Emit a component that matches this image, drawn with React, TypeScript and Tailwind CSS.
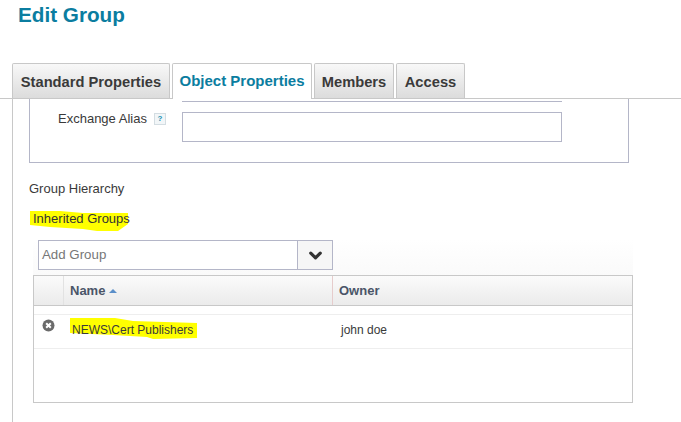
import { ChevronDown } from 'lucide-react';

const tabs = [
  { label: 'Standard Properties', width: 'w-[158px]' },
  { label: 'Object Properties', width: 'w-[140px]', active: true },
  { label: 'Members', width: 'w-[80px]' },
  { label: 'Access', width: 'w-[69px]' },
];

export default function App() {
  return (
    <div className="h-[422px] w-[681px] overflow-hidden bg-white font-['Liberation_Sans',Arial,sans-serif] text-[12px] text-[#3a3a3a]">
      <h1 className="pl-[18px] pt-[3px] text-[20.7px] leading-[24px] font-bold text-[#0b7da0]">Edit Group</h1>

      <div className="mt-[36px] flex h-[36px] items-end gap-[2px] border-b border-[#c8c8c8] pl-[12px]">
        {tabs.map((tab) =>
          tab.active ? (
            <div key={tab.label} className={`${tab.width} relative -mb-px flex h-[36px] items-center justify-center rounded-t-[2px] border border-b-0 border-[#c8c8c8] bg-white text-[15px] font-bold text-[#0b7da0]`}>
              {tab.label}
            </div>
          ) : (
            <div key={tab.label} className={`${tab.width} flex h-[35px] items-center justify-center rounded-t-[2px] border border-b-0 border-[#c8c8c8] bg-gradient-to-b from-[#f8f8f8] to-[#dcdcdc] pt-[2px] text-[14.7px] font-bold text-[#3a3a3a]`}>
              {tab.label}
            </div>
          ),
        )}
      </div>

      <div className="ml-[12px] h-[323px] border-l border-[#c8c8c8] pl-[16px]">
        <div className="h-[64px] w-[600px] border-x border-b border-[#b4b6c8] pt-[2px]">
          <div className="ml-[152px] w-[380px] border-t border-[#b4b6c8]" />
          <div className="mt-[10px] flex">
            <div className="flex w-[152px] justify-start pl-[28px]">
              <span className="text-[13px] leading-[14px]">Exchange Alias</span>
              <span className="ml-[7px] mt-[1px] flex h-[12px] w-[12px] items-center justify-center border border-[#d4dde2] bg-[#f2f6f8] text-[8px] leading-none font-bold text-[#1a8fb0]">?</span>
            </div>
            <div className="h-[30px] w-[380px] border border-[#b4b6c8] bg-white" />
          </div>
        </div>

        <p className="mt-[19px] text-[13px] leading-[14px]">Group Hierarchy</p>

        <div className="relative mt-[14px] h-[14px] pl-[4px]">
          <svg className="absolute left-[1px] top-0" width="100" height="24" viewBox="0 0 100 24">
            <path d="M0 1 L30 1 L53 3 L98 3 L98 14 L88 21 L67 21 L53 19 L20 17 L0 15 Z" fill="#ffff00" />
          </svg>
          <span className="relative text-[13px] leading-[14px] text-[#333]">Inherited Groups</span>
        </div>

        <div className="ml-[4px] mt-[16px] w-[600px] bg-gradient-to-b from-white to-[#fafafa]">
          <div className="ml-[5px] flex h-[30px] w-[295px] border border-[#b4b6c8] bg-white">
            <div className="flex flex-1 items-center pl-[3px] text-[13.3px] text-[#777]">Add Group</div>
            <div className="flex w-[35px] items-center justify-center border-l border-[#b4b6c8] bg-[#f6f6f6]">
              <ChevronDown size={19} strokeWidth={4} className="text-[#333]" />
            </div>
          </div>
          <div className="h-[5px]" />
        </div>

        <div className="ml-[4px] h-[128px] w-[600px] border border-[#c8c8c8] bg-white">
          <div className="flex h-[30px] border-b border-[#c8c8c8] bg-gradient-to-b from-[#fbfbfb] to-[#ebebeb] text-[13px] font-bold text-[#4a5568]">
            <div className="w-[30px] border-r border-[#e2e2e2]" />
            <div className="flex w-[269px] items-center gap-[4px] border-r border-[#e6cccc] pl-[6px]">
              Name
              <span className="mt-[1px] h-0 w-0 border-x-[4px] border-b-[4px] border-x-transparent border-b-[#5b8fc9]" />
            </div>
            <div className="flex flex-1 items-center pl-[6px]">Owner</div>
          </div>
          <div className="mt-[8px] flex h-[35px] border-y border-[#eeeeee]">
            <div className="w-[30px] pl-[8px] pt-[4px]">
              <svg width="13" height="13" viewBox="0 0 13 13">
                <circle cx="6.5" cy="6.5" r="6" fill="#6b6b6b" />
                <path d="M4.2 4.2 L8.8 8.8 M8.8 4.2 L4.2 8.8" stroke="#fff" strokeWidth="2" />
              </svg>
            </div>
            <div className="relative flex w-[269px] items-center pb-[3px] pl-[8px]">
              <svg className="absolute left-[6px] top-[3px]" width="128" height="23" viewBox="0 0 128 23">
                <path d="M0 0 L45 0 L63 3 L127 5 L127 20 L83 21 L77 19 L43 17 L0 15 Z" fill="#ffff00" />
              </svg>
              <span className="relative">NEWS\Cert Publishers</span>
            </div>
            <div className="flex flex-1 items-center pb-[3px] pl-[8px]">john doe</div>
          </div>
        </div>
      </div>
    </div>
  );
}
